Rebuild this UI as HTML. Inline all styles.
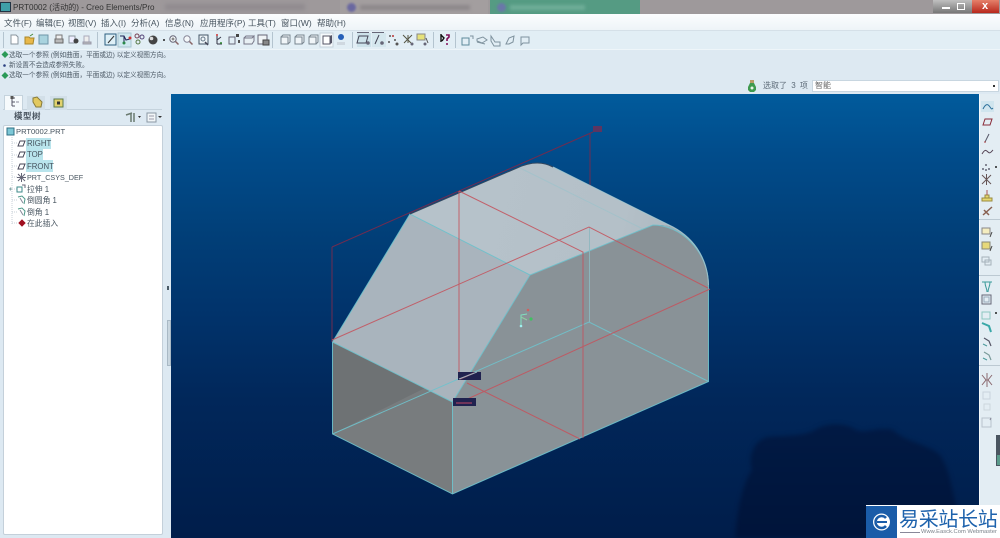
<!DOCTYPE html>
<html lang="zh"><head><meta charset="utf-8"><title>PRT0002</title>
<style>
*{box-sizing:border-box}
html,body{margin:0;padding:0;width:1000px;height:538px;overflow:hidden;background:#dde9f2}
body{position:relative;font-family:"Liberation Sans","Noto Sans CJK SC",sans-serif;color:#3c4a55}
.a{position:absolute;white-space:nowrap}
.s{filter:blur(.3px)}
.m{top:16px;font-size:8.5px;line-height:14px;color:#46535e}
.g{font-size:6.65px;line-height:11px;color:#4c5965}
.t{font-size:7.8px;line-height:11px;color:#46535e}
</style></head><body>
<div class="a" style="left:0;top:0;width:1000px;height:14px;background:#9e999b"></div>
<div class="a" style="left:165px;top:4px;width:140px;height:6px;background:#8f8a8e;filter:blur(2px)"></div>
<div class="a" style="left:340px;top:0;width:148px;height:14px;background:#a39e9f"></div>
<div class="a" style="left:347px;top:3px;width:9px;height:9px;background:#6a68a0;border-radius:50%;filter:blur(1px)"></div>
<div class="a" style="left:360px;top:5px;width:110px;height:5px;background:#8d888b;filter:blur(1.500px)"></div>
<div class="a" style="left:490px;top:0;width:150px;height:14px;background:#559b83"></div>
<div class="a" style="left:497px;top:3px;width:9px;height:9px;background:#6a78a8;border-radius:50%;filter:blur(1px)"></div>
<div class="a" style="left:510px;top:5px;width:75px;height:5px;background:#6fae98;filter:blur(1.500px)"></div>
<div class="a" style="left:0;top:2px;width:11px;height:10px;background:#3f9fa8;border:1px solid #234"></div>
<div class="a s" style="left:13px;top:1px;font-size:8.1px;line-height:13px;color:#333">PRT0002 (活动的) - Creo Elements/Pro</div>
<div class="a" style="left:933px;top:0;width:25px;height:13px;background:linear-gradient(#c0c0c0,#777)"></div>
<div class="a" style="left:958px;top:0;width:14px;height:13px;background:linear-gradient(#c0c0c0,#777)"></div>
<div class="a" style="left:972px;top:0;width:27px;height:13px;background:linear-gradient(#e5806a,#b8281c)"></div>
<div class="a" style="left:942px;top:7px;width:8px;height:2px;background:#fff"></div>
<div class="a" style="left:957px;top:3px;width:8px;height:7px;border:1px solid #fff"></div>
<div class="a" style="left:982px;top:-1px;font-size:11px;font-weight:bold;color:#fff;line-height:14px">x</div>

<div class="a" style="left:0;top:14px;width:1000px;height:17px;background:linear-gradient(#fbfdfe,#eef4f8);border-bottom:1px solid #d5e0e8"></div>
<div class="a s m" style="left:4px">文件(F)</div>
<div class="a s m" style="left:36px">编辑(E)</div>
<div class="a s m" style="left:68px">视图(V)</div>
<div class="a s m" style="left:101px">插入(I)</div>
<div class="a s m" style="left:131px">分析(A)</div>
<div class="a s m" style="left:165px">信息(N)</div>
<div class="a s m" style="left:200px">应用程序(P)</div>
<div class="a s m" style="left:248px">工具(T)</div>
<div class="a s m" style="left:281px">窗口(W)</div>
<div class="a s m" style="left:317px">帮助(H)</div>

<div class="a" style="left:0;top:31px;width:1000px;height:19px;background:#e2eef5;border-bottom:1px solid #eef5f9"></div>

<svg class="a" style="left:0;top:30px" width="540" height="20" viewBox="0 30 540 20" fill="none" stroke-width="1">
<g stroke="#b4c4cf"><path d="M3.500 32V48M97.500 32V48M272.500 32V48M352.500 32V48M433.500 32V48M455.500 32V48"/></g>
<rect x="320" y="33" width="13" height="14" fill="#f6fafc" stroke="#c5d3dc"/>
<path d="M11 35h5l2 2v7h-7z" fill="#fff" stroke="#8a959e"/>
<path d="M25 37h4l1 1h4l-1 6h-8z" fill="#e8b84a" stroke="#a98628"/><path d="M30 36l3-2" stroke="#4a8a3a"/>
<rect x="39" y="35" width="9" height="9" fill="#a9d3de" stroke="#6f95a8"/>
<path d="M55 39h8v4h-8z" fill="#b9b9b9" stroke="#666"/><path d="M56 35h6v4h-6z" fill="#eee" stroke="#777"/>
<path d="M69 36h6v7h-6z" fill="#eef" stroke="#8a959e"/><circle cx="76" cy="41" r="2.500" fill="#444"/>
<path d="M84 36h5v6h-5z" fill="#eee" stroke="#aab"/><path d="M83 42h8v2h-8z" fill="#bbb" stroke="#99a"/>
<rect x="105" y="34" width="11" height="11" fill="#dff0f7" stroke="#2c5f80"/><path d="M108 43l6-7" stroke="#333"/>
<rect x="118" y="33" width="13" height="14" fill="#cfe8ef" stroke="#a8c4d0"/><path d="M120 36h4l2 4 4-1M124 36v7" stroke="#225"/><circle cx="124" cy="43" r="1.500" fill="#2a8a4a"/><circle cx="130" cy="38" r="1.500" fill="#c33"/>
<circle cx="137" cy="36" r="2" stroke="#745"/><circle cx="142" cy="37" r="2" stroke="#547"/><circle cx="138" cy="42" r="2" stroke="#574"/>
<circle cx="153" cy="40" r="4.500" fill="#444"/><circle cx="151.500" cy="38.500" r="1.800" fill="#ddd"/><circle cx="164" cy="40" r="1" fill="#222"/>
<circle cx="173" cy="39" r="3.200" fill="#f4f8fa" stroke="#667"/><path d="M175.500 41.500l3 3" stroke="#866" stroke-width="1.500"/><path d="M171.500 39h3M173 37.500v3" stroke="#666"/>
<circle cx="187" cy="39" r="3.200" fill="#f4f8fa" stroke="#889"/><path d="M189.500 41.500l3 3" stroke="#866" stroke-width="1.500"/>
<rect x="199" y="35" width="9" height="9" fill="#eef5f8" stroke="#456"/><circle cx="203" cy="39" r="2" stroke="#678"/><path d="M205 42l3 3" stroke="#445" stroke-width="1.500"/>
<path d="M217 36v8M217 44h5M217 40l4-3" stroke="#334"/><circle cx="217" cy="35" r="1" fill="#c33"/><circle cx="221" cy="43" r="1" fill="#383"/>
<path d="M229 37h6v7h-6z" stroke="#667"/><path d="M236 34h3v3h-3z" fill="#444"/><path d="M238 40h2v3h-2z" fill="#555"/>
<path d="M244 38h8l2-2v5l-2 3h-8z" fill="#e8f0f4" stroke="#778"/><path d="M244 38l2-2h8" stroke="#778"/>
<rect x="258" y="35" width="9" height="9" fill="#f0f4f6" stroke="#667"/><rect x="263" y="40" width="6" height="5" fill="#888" stroke="#444"/>
<g stroke="#78858f" fill="#f0f5f8"><path d="M281 37h7v7h-7zM281 37l2-2h7v7l-2 2"/><path d="M295 37h7v7h-7zM295 37l2-2h7v7l-2 2"/><path d="M309 37h7v7h-7zM309 37l2-2h7v7l-2 2"/></g>
<path d="M323 36h7v8h-7z" fill="#fff" stroke="#556"/><path d="M330 36l2-1v8l-2 1z" fill="#556"/>
<circle cx="341" cy="37" r="3" fill="#2660b8"/><path d="M337 42h8v3h-8z" fill="#cfd8e0"/>
<rect x="357" y="33" width="14" height="14" fill="#cde2ea"/><rect x="372" y="33" width="14" height="14" fill="#d5e7ee"/>
<path d="M357 32.500h12M372 32.500h12" stroke="#667"/>
<path d="M359 36h9l-2 7h-9z" stroke="#445"/><circle cx="368" cy="43" r="1.800" fill="#667"/>
<path d="M379 35l-4 9" stroke="#445"/><circle cx="382" cy="43" r="1.800" fill="#667"/>
<g fill="#555"><circle cx="390" cy="36" r="1"/><circle cx="395" cy="40" r="1"/><circle cx="389" cy="42" r="1"/><circle cx="397" cy="44" r="1.500"/></g><circle cx="393" cy="36" r="1" fill="#b33"/>
<path d="M403 35l8 8M412 35l-8 8M408 35v8" stroke="#554"/><circle cx="412" cy="44" r="1.500" fill="#667"/>
<rect x="417" y="34" width="8" height="6" fill="#e6e27a" stroke="#888"/><path d="M426 38l2 5" stroke="#555"/><circle cx="425" cy="44" r="1.500" fill="#667"/>
<path d="M441 35l3 3-2 3M441 34v8" stroke="#111" stroke-width="1.400"/><path d="M446 35h3v2l-2 2v2" stroke="#80105a" stroke-width="1.600"/><circle cx="447" cy="44" r="1" fill="#80105a"/>
<g stroke="#7f929e"><rect x="462" y="38" width="7" height="7" stroke="#5d8a9a"/><path d="M470 36h3v3"/><path d="M477 39l6-2 4 3-5 3-5-2z"/><path d="M477 42l8 2"/><path d="M491 36l4 6h5v4h-6l-3-5z"/><path d="M506 44l3-6 5-2-1 6-4 2z"/><path d="M521 37h8v6h-6l-2 2z"/></g>
</svg>

<svg class="a" style="left:0;top:50px" width="10" height="34" viewBox="0 50 10 34"><path d="M5 51l3.500 3.500-3.500 3.500-3.500-3.500z" fill="#2b9a58"/><circle cx="4.500" cy="65.500" r="1.300" fill="#2a3f80"/><path d="M5 72l3.500 3.500-3.500 3.500-3.500-3.500z" fill="#2b9a58"/></svg>
<div class="a s g" style="left:9px;top:50px">选取一个参照 (例如曲面，平面或边) 以定义视图方向。</div>
<div class="a s g" style="left:9px;top:60px">新设置不会造成参照失败。</div>
<div class="a s g" style="left:9px;top:70px">选取一个参照 (例如曲面，平面或边) 以定义视图方向。</div>

<svg class="a" style="left:746px;top:79px" width="12" height="14"><rect x="4" y="1" width="4" height="3" fill="#b99a68"/><path d="M4 4h4l2 4v3l-2 2H4l-2-2V8z" fill="#3f9a4f"/><circle cx="6" cy="9" r="1.500" fill="#e9f2e6"/></svg>
<div class="a s" style="left:763px;top:80px;font-size:8px;line-height:12px;color:#5d6b78;word-spacing:2px">选取了 3 项</div>
<div class="a" style="left:812px;top:80px;width:187px;height:12px;background:#fff;border:1px solid #c8d6e0"></div>
<div class="a s" style="left:815px;top:80px;font-size:8px;line-height:12px;color:#666">智能</div>
<div class="a" style="left:993px;top:85px;width:2px;height:2px;background:#333"></div>

<div class="a" style="left:171px;top:94px;width:808px;height:444px;background:linear-gradient(#015b9c 0,#014c8b 60px,#013f78 140px,#01336b 220px,#01275a 306px,#001d4a 444px)"></div>

<svg class="a" style="left:171px;top:94px" width="808" height="444" viewBox="171 94 808 444">
<defs><linearGradient id="c" x1="0" y1="420" x2="0" y2="538" gradientUnits="userSpaceOnUse"><stop offset="0" stop-color="#011a44"/><stop offset="1" stop-color="#00143a"/></linearGradient>
<linearGradient id="t" x1="470" y1="190" x2="700" y2="250" gradientUnits="userSpaceOnUse"><stop offset="0" stop-color="#b6c2ca"/><stop offset=".65" stop-color="#b4c0c8"/><stop offset="1" stop-color="#aab5bd"/></linearGradient></defs>
<path d="M735 538C738 500 745 480 752 470C748 458 753 440 768 437C785 436 805 436 815 430C825 423 845 422 856 430C865 434 880 426 893 430C905 442 930 445 940 455C950 470 952 490 955 500L960 538Z" fill="url(#c)" filter="blur(2px)"/>

<g filter="blur(.3px)">
<path d="M332 247L593 132M590 133V227M332 247V342" stroke="#6f2c50" stroke-width="1" fill="none"/>
<rect x="593" y="126" width="9" height="6" fill="#5d3560"/>

<path d="M332.500 342L452.500 402V494L332.500 434Z" fill="#6e7274"/>
<path d="M332.500 434L425 388L452.500 402V494Z" fill="#787c7e"/>
<path d="M452.500 402L530 275L653 225C680 225 708 250 708.500 285V381.500L452.500 494Z" fill="#899297"/>
<path d="M332.500 342L410 214L530 275L452.500 402Z" fill="#a9b4bd"/>
<path d="M410 214L517 168C530 162 542 161 553 167L673 227C665 225 658 225 653 225L530 275Z" fill="url(#t)"/>
<path d="M673 227C697 240 708 262 708.500 285C708 250 680 225 653 225C660 225 667 225 673 227Z" fill="#a0abb3"/>

<g fill="none" stroke="#6fc3cd" stroke-width="1" opacity=".9">
<path d="M332.500 342V434L452.500 494L708.500 381.500V285C708 250 680 225 653 225L530 275L452.500 402V494"/>
<path d="M332.500 342L410 214L530 275"/>
<path d="M332.500 342L452.500 402"/>
<path d="M332.500 434L589 322L708.500 381.500"/>
<path d="M589.500 227V322" stroke="#8fb8c0"/>
<path d="M520 168L643 229" stroke="#8bc3cc" opacity=".45"/>
<path d="M553 167L673 227C697 240 708 262 708.500 285" stroke="#a5c8d0"/>
</g>
<path d="M410 214L517 168C530 162 542 161 553 167" fill="none" stroke="#33475f" stroke-width="1"/>

<g fill="none" stroke="#c4545e" stroke-width="1" opacity=".88">
<path d="M459 191V373"/><path d="M459 191L583 252V438"/>
<path d="M467 383L580 439"/>
<path d="M332 340L589 227L708 288"/>
<path d="M463 401L710 289"/>
</g>
<g fill="none">
<path d="M521 326V315l6-1" stroke="#7fe0c0"/><path d="M521 317l6 3" stroke="#8fd0a0"/>
</g>
<circle cx="528" cy="310" r="1.300" fill="#d06060"/><circle cx="531" cy="319" r="1.600" fill="#40c060"/><circle cx="521" cy="326" r="1.300" fill="#a0f0f0"/>
<rect x="458" y="372" width="23" height="8" fill="#20224f"/><rect x="453" y="398" width="23" height="8" fill="#20224f"/>
<path d="M460 379l14-6M456 403h16" stroke="#a04060" stroke-width="1.300"/>
<path d="M459 379L477 372" stroke="#9fb2bc" stroke-width="1"/>
</g>
</svg>

<div class="a" style="left:167px;top:286px;width:2px;height:4px;background:#4a5a66"></div>
<div class="a" style="left:167px;top:320px;width:4px;height:46px;background:#c9d6df;border:1px solid #a9b9c5"></div>

<div class="a" style="left:3px;top:94px;width:159px;height:16px;border-bottom:1px solid #c5d3dd"></div>
<div class="a" style="left:4px;top:95px;width:19px;height:15px;background:#f6fafc;border:1px solid #c5d3dd;border-bottom:none"></div>
<div class="a" style="left:27px;top:96px;width:18px;height:14px;background:#d2dfe8"></div>
<div class="a" style="left:50px;top:96px;width:17px;height:14px;background:#d2dfe8"></div>
<svg class="a" style="left:4px;top:94px" width="70" height="16" fill="none"><path d="M8 3v9M8 4h3M8 8h3M8 12h3" stroke="#556"/><rect x="6.500" y="2" width="3" height="3" fill="#555"/><path d="M12 8h3" stroke="#889"/><path d="M29 4l4-1 5 5-1 5h-5l-3-5z" fill="#e2c85e" stroke="#887b3a"/><rect x="50" y="5" width="9" height="8" fill="#e2d26e" stroke="#5a7a4a"/><rect x="53" y="7.500" width="3" height="3" fill="#333"/></svg>

<div class="a s" style="left:14px;top:110px;font-size:8.5px;line-height:12px;font-weight:bold;color:#4a5560;letter-spacing:.5px">模型树</div>
<svg class="a" style="left:124px;top:110px" width="40" height="14" fill="none"><path d="M2 5l6-2M7 3v9M10 3v9" stroke="#6a7a70" stroke-width="1.500"/><path d="M14 6h3l-1.500 2z" fill="#333"/><rect x="23" y="3" width="9" height="9" fill="#f2f6f8" stroke="#8a98a4"/><path d="M25 6h5M25 9h5" stroke="#99a"/><path d="M34 6h4l-2 2z" fill="#333"/></svg>

<div class="a" style="left:3px;top:125px;width:160px;height:410px;background:#fff;border:1px solid #c4d0da;border-radius:2px"></div>
<div class="a" style="left:26px;top:138px;width:25px;height:11px;background:#b9e4ec"></div>
<div class="a" style="left:26px;top:149px;width:17px;height:11px;background:#b9e4ec"></div>
<div class="a" style="left:26px;top:160px;width:27px;height:12px;background:#b9e4ec"></div>
<svg class="a" style="left:4px;top:126px" width="50" height="105" viewBox="4 126 50 105" fill="none">
<path d="M12 137V224M12 143h5M12 155h5M12 166h5M12 177h5M12 189h5M12 200h5M12 212h5M12 223h5" stroke="#c8d2d8" stroke-dasharray="1 1"/>
<rect x="7" y="128" width="7" height="7" fill="#7cc7d6" stroke="#2e6f84"/>
<path d="M18 146l2-5h5l-2 5z" stroke="#445"/><path d="M18 157l2-5h5l-2 5z" stroke="#445"/><path d="M18 169l2-5h5l-2 5z" stroke="#445"/>
<path d="M18 174l7 7M25 174l-7 7M21.500 173v9M17 177.500h9" stroke="#667"/>
<path d="M9 189h3M10.500 187.500v3" stroke="#8aa"/><rect x="17" y="187" width="5" height="5" stroke="#3d8a8a"/><path d="M22 185h3v3" stroke="#667"/>
<path d="M18 197l4-1 3 3-1 5" stroke="#4e9a8a"/><path d="M20 198l3 5" stroke="#889"/>
<path d="M18 209l4-1 3 3-1 5" stroke="#4e9a8a"/><path d="M20 210l3 5" stroke="#889"/>
<path d="M19 223h6M22 220l3 3-3 3-3-3z" fill="#a01020" stroke="#a01020"/>
</svg>
<div class="a s t" style="left:16px;top:126px;font-size:7.6px">PRT0002.PRT</div>
<div class="a s t" style="left:27px;top:138px">RIGHT</div>
<div class="a s t" style="left:27px;top:149px">TOP</div>
<div class="a s t" style="left:27px;top:161px">FRONT</div>
<div class="a s t" style="left:27px;top:172px;font-size:7.2px">PRT_CSYS_DEF</div>
<div class="a s t" style="left:27px;top:184px">拉伸 1</div>
<div class="a s t" style="left:27px;top:195px">倒圆角 1</div>
<div class="a s t" style="left:27px;top:207px">倒角 1</div>
<div class="a s t" style="left:27px;top:218px">在此插入</div>

<div class="a" style="left:979px;top:94px;width:21px;height:444px;background:#e3edf3;border-left:1px solid #f4f8fa"></div>
<svg class="a" style="left:979px;top:94px" width="21" height="444" viewBox="979 94 21 444" fill="none">
<rect x="981" y="101" width="13" height="11" fill="#d0e5ee"/><path d="M983 109c3-6 5-5 7-2s2 2 3 1" stroke="#2b6f9a"/>
<path d="M983 125l2-6h7l-2 6z" stroke="#8a2b38"/>
<path d="M985 142l4-8" stroke="#556"/><circle cx="985" cy="142" r=".8" fill="#a33"/>
<path d="M982 154c3-5 4-4 6-2s3 0 5-2" stroke="#545"/>
<g fill="#667"><circle cx="986" cy="165" r="1"/><circle cx="983" cy="169" r="1"/><circle cx="989" cy="169" r="1"/><circle cx="986" cy="170" r="1"/></g><circle cx="996" cy="167" r="1" fill="#222"/>
<path d="M982 175l9 9M991 175l-9 9M986.500 174v11" stroke="#655"/>
<path d="M982 198h10v3h-10zM985 195h4v3h-4z" fill="#e6d970" stroke="#998a40"/><path d="M987 190v5" stroke="#a55"/>
<path d="M983 215l9-8M984 210l5 5" stroke="#886050" stroke-width="1.500"/>
<path d="M979 219.500h21M979 365.500h21" stroke="#bcc9d2"/>
<rect x="982" y="228" width="8" height="6" fill="#f4edc0" stroke="#888"/><path d="M992 232l-2 5" stroke="#444"/>
<rect x="982" y="242" width="8" height="7" fill="#e6d87a" stroke="#887"/><path d="M992 246l-2 5" stroke="#444"/>
<path d="M982 257h7v5h-7zM985 260h6v5h-6z" stroke="#a5b1ba"/>
<path d="M979 275.500h21" stroke="#bcc9d2"/>
<path d="M982 282h10M985 282c0 5 2 6 2 10M990 282c0 5-2 6-2 10" stroke="#3a9a9a"/>
<rect x="982" y="295" width="9" height="9" stroke="#667"/><rect x="984" y="297" width="5" height="5" stroke="#9ab"/>
<path d="M982 312h8v7h-8z" stroke="#8dc8c0"/><circle cx="996" cy="313" r="1" fill="#222"/>
<path d="M982 323l7 3 2 6" stroke="#3aa8a8" stroke-width="2"/>
<path d="M984 338l5 3 2 5" stroke="#556" stroke-width="1.200"/><path d="M983 344l4 2" stroke="#4a9a9a"/>
<path d="M984 352l5 3 2 5" stroke="#7a9a9a" stroke-width="1.200"/><path d="M983 358l4 2" stroke="#4a9a9a"/>
<path d="M987 373v14M982 375l4 5-4 5M992 375l-4 5 4 5" stroke="#8b6a70"/>
<path d="M983 392h7v7h-7z" stroke="#c8d4dc"/><path d="M984 404h6v6h-6z" stroke="#ccd7de"/>
<path d="M982 418h9v9h-9z" stroke="#b8c4cc"/><path d="M991 418l-1 2" stroke="#889"/>
<rect x="996" y="435" width="4" height="31" fill="#4a5560"/><rect x="997" y="455" width="3" height="10" fill="#5a9a8a"/>
</svg>

<div class="a" style="left:866px;top:505px;width:134px;height:33px;background:#fff"></div>
<div class="a" style="left:866px;top:506px;width:31px;height:32px;background:#1a5ca8"></div>
<svg class="a" style="left:866px;top:506px" width="31" height="32"><circle cx="15.500" cy="16" r="8.500" fill="#fff"/><path d="M20 12a6 6 0 1 0 0 8" fill="none" stroke="#1a5ca8" stroke-width="2.500"/><path d="M11 16h10" stroke="#1a5ca8" stroke-width="2"/></svg>
<div class="a s" style="left:899px;top:506px;font-size:20px;line-height:23px;color:#1d62ac;letter-spacing:-.3px;font-family:'Noto Sans CJK SC','Liberation Sans',sans-serif">易采站长站</div>
<div class="a" style="left:900px;top:532px;width:20px;height:1px;background:#889"></div>
<div class="a s" style="left:921px;top:528px;font-size:5.800px;line-height:9px;color:#7a828a">Www.Easck.Com Webmaster</div>
</body></html>
